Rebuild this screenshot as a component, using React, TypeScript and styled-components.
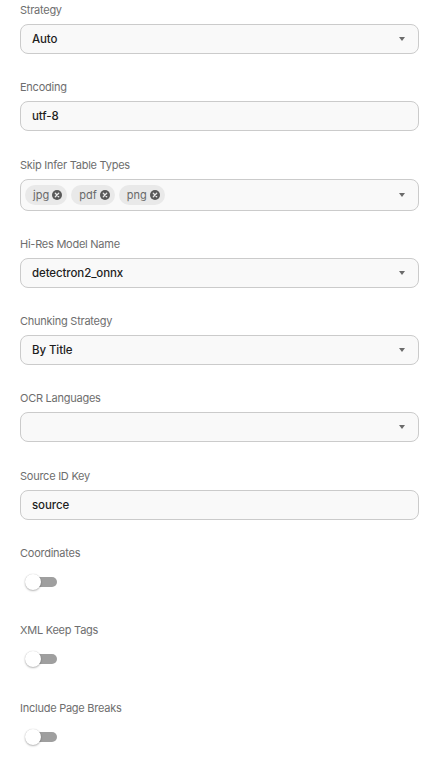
import React from 'react';
import styled, { createGlobalStyle } from 'styled-components';

const GlobalStyle = createGlobalStyle`
  html, body {
    margin: 0;
    padding: 0;
    background: #ffffff;
    font-family: Inter, "Noto Sans", "Liberation Sans", sans-serif;
  }
`;

const Form = styled.div`
  display: flex;
  flex-direction: column;
  gap: 25.3px;
  padding: 2px 12px 20px 20px;
  width: 431px;
  box-sizing: border-box;
`;

const Field = styled.div`
  display: flex;
  flex-direction: column;
  gap: 6px;
`;

const Label = styled.label`
  font-size: 11px;
  line-height: 16px;
  color: #6e6e6e;
  letter-spacing: -0.25px;
`;

const Box = styled.div<{ $tall?: boolean }>`
  display: flex;
  align-items: center;
  height: ${(p) => (p.$tall ? '32px' : '30px')};
  box-sizing: border-box;
  border: 1px solid #cbcbcb;
  border-radius: 8px;
  background: #f9f9f9;
  padding: ${(p) => (p.$tall ? '0 13px 0 4px' : '0 13px 0 11px')};
`;

const Value = styled.span`
  flex: 1;
  font-size: 11.5px;
  font-weight: 450;
  color: #1e1e1e;
  letter-spacing: -0.1px;
`;

const Arrow = styled.span`
  width: 0;
  height: 0;
  border-left: 3.5px solid transparent;
  border-right: 3.5px solid transparent;
  border-top: 4px solid #6b6b6b;
`;

const ChipList = styled.div`
  flex: 1;
  display: flex;
  gap: 4px;
`;

const Chip = styled.span`
  display: inline-flex;
  align-items: center;
  gap: 3px;
  height: 20px;
  padding: 0 5px 0 8px;
  border-radius: 10px;
  background: #e9e9e9;
  font-size: 11px;
  color: #6a6a6a;
`;

const DeleteIcon = () => (
  <svg width="10" height="10" viewBox="0 0 10 10">
    <circle cx="5" cy="5" r="5" fill="#585858" />
    <path d="M3.3 3.3 L6.7 6.7 M6.7 3.3 L3.3 6.7" stroke="#e9e9e9" strokeWidth="1.3" strokeLinecap="round" />
  </svg>
);

const SwitchRow = styled.div`
  display: flex;
  align-items: center;
  height: 30px;
`;

const Switch = styled.span`
  position: relative;
  display: inline-block;
  width: 32px;
  height: 16px;
  margin-left: 5px;
`;

const Track = styled.span`
  position: absolute;
  left: 8px;
  right: 0;
  top: 3px;
  height: 10px;
  border-radius: 5px;
  background: #9f9f9f;
`;

const Knob = styled.span`
  position: absolute;
  left: 0;
  top: 0;
  width: 16px;
  height: 16px;
  border-radius: 50%;
  background: #ffffff;
  box-shadow: 0 1px 2px rgba(0, 0, 0, 0.28), 0 0 1px rgba(0, 0, 0, 0.2);
`;

function Select({ value }: { value?: string }) {
  return (
    <Box>
      <Value>{value}</Value>
      <Arrow />
    </Box>
  );
}

function TextInput({ value }: { value: string }) {
  return (
    <Box>
      <Value>{value}</Value>
    </Box>
  );
}

function Toggle() {
  return (
    <SwitchRow>
      <Switch>
        <Track />
        <Knob />
      </Switch>
    </SwitchRow>
  );
}

export default function App() {
  return (
    <>
      <GlobalStyle />
      <Form>
        <Field>
          <Label>Strategy</Label>
          <Select value="Auto" />
        </Field>
        <Field>
          <Label>Encoding</Label>
          <TextInput value="utf-8" />
        </Field>
        <Field>
          <Label>Skip Infer Table Types</Label>
          <Box $tall>
            <ChipList>
              {['jpg', 'pdf', 'png'].map((t) => (
                <Chip key={t}>
                  {t}
                  <DeleteIcon />
                </Chip>
              ))}
            </ChipList>
            <Arrow />
          </Box>
        </Field>
        <Field>
          <Label>Hi-Res Model Name</Label>
          <Select value="detectron2_onnx" />
        </Field>
        <Field>
          <Label>Chunking Strategy</Label>
          <Select value="By Title" />
        </Field>
        <Field>
          <Label>OCR Languages</Label>
          <Select />
        </Field>
        <Field>
          <Label>Source ID Key</Label>
          <TextInput value="source" />
        </Field>
        <Field>
          <Label>Coordinates</Label>
          <Toggle />
        </Field>
        <Field>
          <Label>XML Keep Tags</Label>
          <Toggle />
        </Field>
        <Field>
          <Label>Include Page Breaks</Label>
          <Toggle />
        </Field>
      </Form>
    </>
  );
}
